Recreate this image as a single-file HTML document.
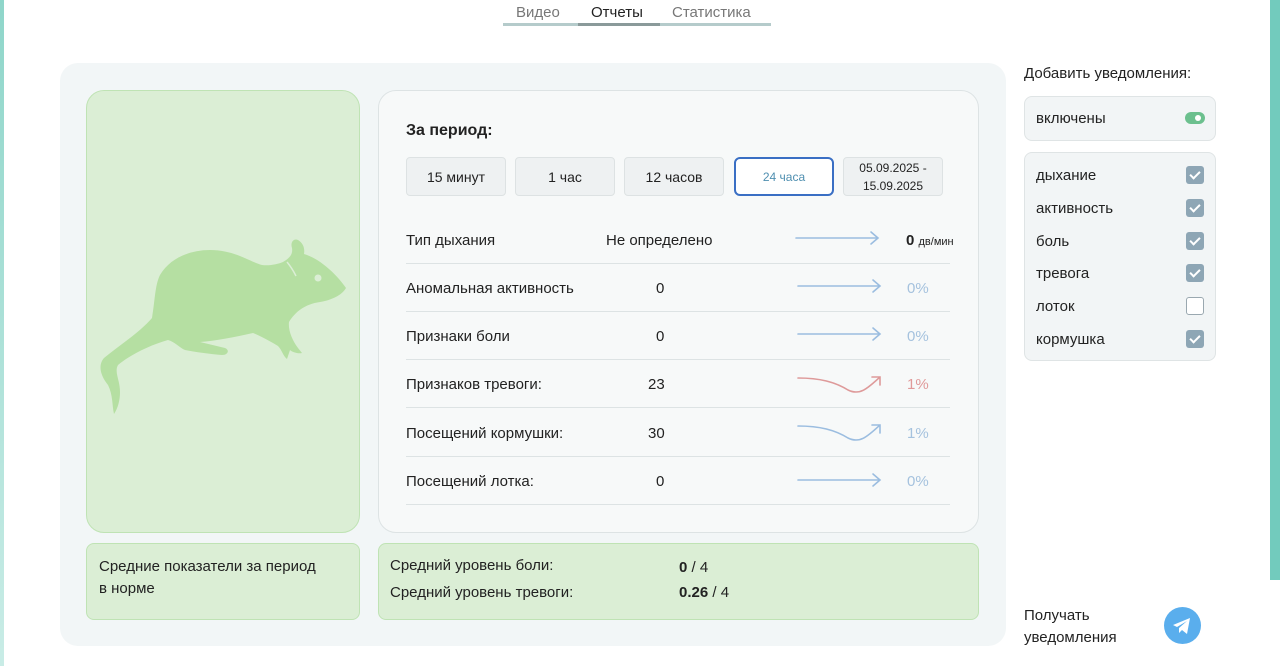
<!DOCTYPE html>
<html><head><meta charset="utf-8"><style>
*{box-sizing:border-box;margin:0;padding:0}
body{width:1280px;height:666px;overflow:hidden;background:#fff;font-family:"Liberation Sans",sans-serif;color:#222;position:relative}
.abs{position:absolute}
.edgeR{right:0;top:0;width:10px;height:580px;background:#72cbbd}
.edgeL{left:0;top:0;width:4px;height:666px;background:linear-gradient(#8fd6ca,#c9ece6)}
.nav{top:4px;font-size:15px;color:#777}
.panel{left:60px;top:63px;width:946px;height:583px;background:#f2f6f7;border-radius:18px}
.green{background:#dbeed5;border:1px solid #bfe3b4;border-radius:18px}
.card{left:378px;top:90px;width:601px;height:443px;background:#f7f9f9;border:1px solid #dde3e4;border-radius:18px}
.btn{top:157px;height:39px;background:#eef1f2;border:1px solid #dde2e3;border-radius:4px;font-size:14px;display:flex;align-items:center;justify-content:center;text-align:center;line-height:18px}
.row{left:406px;width:544px;height:48px;border-bottom:1px solid #dde3e4;font-size:15px}
.row span{position:absolute;top:16px;white-space:nowrap}
.chk{left:1024px;width:192px;background:#f2f5f6;border:1px solid #dfe4e5;border-radius:8px}
.cb{position:absolute;left:161px;width:18px;height:18px;border-radius:3px;background:#8ea6b5}
.cb:after{content:"";position:absolute;left:6px;top:3px;width:4px;height:8px;border:solid #fff;border-width:0 2px 2px 0;transform:rotate(45deg)}
</style></head><body>
<div class="abs edgeR"></div><div class="abs edgeL"></div>
<div class="abs nav" style="left:516px">Видео</div>
<div class="abs nav" style="left:591px;color:#222">Отчеты</div>
<div class="abs nav" style="left:672px">Статистика</div>
<div class="abs" style="left:503px;top:23px;width:268px;height:3px;background:#b5cbcb"></div>
<div class="abs" style="left:578px;top:23px;width:82px;height:3px;background:#8a9a9a"></div>

<div class="abs panel"></div>
<div class="abs green" style="left:86px;top:90px;width:274px;height:443px"></div>
<svg class="abs" style="left:86px;top:90px" width="274" height="443" viewBox="86 90 274 443">
<path fill="#b5dfa2" d="M283,262 C290,258 293,254 292,248 C290,242 294,238 298,240 C303,243 305,248 304,254 C318,258 335,272 346,288 C342,295 332,300 320,302 C305,304 295,312 289,322 C288,330 292,340 298,348 L302,353 C298,354 292,352 290,350 L287,359 C283,356 282,350 278,346 C268,340 260,336 253,333 C235,337 215,341 200,342 L225,348 C230,350 228,355 222,355 C210,354 195,352 185,350 C180,348 175,342 168,340 C150,345 130,355 118,365 C114,372 120,380 120,392 C120,400 118,408 114,414 C112,405 113,395 108,385 C100,375 98,365 104,358 C120,345 140,332 152,318 C155,300 155,285 160,275 C170,258 190,250 210,250 C235,250 250,262 262,265 C270,266 278,264 283,262 Z"/>
<path d="M287,262 C292,268 294,272 296,276" stroke="#dbeed5" stroke-width="1.5" fill="none"/>
<circle cx="318" cy="278" r="3.5" fill="#dbeed5"/>
</svg>

<div class="abs card"></div>
<div class="abs" style="left:406px;top:122px;font-size:16px;font-weight:bold">За период:</div>
<div class="abs btn" style="left:406px;width:100px">15 минут</div>
<div class="abs btn" style="left:515px;width:100px">1 час</div>
<div class="abs btn" style="left:624px;width:100px">12 часов</div>
<div class="abs btn" style="left:734px;width:100px;background:#fff;border:2px solid #3a6fc4;border-radius:6px;color:#4f8fb0;font-size:12px">24 часа</div>
<div class="abs btn" style="left:843px;width:100px;font-size:12px">05.09.2025 -<br>15.09.2025</div>

<div class="abs row" style="top:216px"><span style="left:0">Тип дыхания</span><span style="left:200px">Не определено</span><span style="left:500px;font-weight:bold">0 <small style="font-size:11px;font-weight:normal">дв/мин</small></span></div>
<div class="abs row" style="top:264px"><span style="left:0">Аномальная активность</span><span style="left:250px">0</span><span style="left:501px;color:#a5c2de">0%</span></div>
<div class="abs row" style="top:312px"><span style="left:0">Признаки боли</span><span style="left:250px">0</span><span style="left:501px;color:#a5c2de">0%</span></div>
<div class="abs row" style="top:360px"><span style="left:0">Признаков тревоги:</span><span style="left:242px">23</span><span style="left:501px;color:#e09a9a">1%</span></div>
<div class="abs row" style="top:409px"><span style="left:0">Посещений кормушки:</span><span style="left:242px">30</span><span style="left:501px;color:#a5c2de">1%</span></div>
<div class="abs row" style="top:457px"><span style="left:0">Посещений лотка:</span><span style="left:250px">0</span><span style="left:501px;color:#a5c2de">0%</span></div>
<svg class="abs" style="left:780px;top:220px" width="120" height="280" fill="none" stroke-width="1.6" stroke-linecap="round">
<g stroke="#9bbde0"><path d="M16 18H98M91 12l7 6-7 6"/><path d="M18 66H100M93 60l7 6-7 6"/><path d="M18 114H100M93 108l7 6-7 6"/></g>
<path stroke="#de9a9a" d="M18 158C40 158 55 162 68 170 80 176 88 168 100 157M92 157h8v8"/>
<path stroke="#9bbde0" d="M18 206C40 206 55 210 68 218 80 224 88 216 100 205M92 205h8v8"/>
<path stroke="#9bbde0" d="M18 260H100M93 254l7 6-7 6"/>
</svg>

<div class="abs green" style="left:86px;top:543px;width:274px;height:77px;border-radius:8px;padding:12px;font-size:15px;line-height:22px">Средние показатели за период<br>в норме</div>
<div class="abs green" style="left:378px;top:543px;width:601px;height:77px;border-radius:8px;font-size:15px">
<div class="abs" style="left:11px;top:13px">Средний уровень боли:</div>
<div class="abs" style="left:300px;top:15px"><b>0</b> / 4</div>
<div class="abs" style="left:11px;top:40px">Средний уровень тревоги:</div>
<div class="abs" style="left:300px;top:40px"><b>0.26</b> / 4</div>
</div>

<div class="abs" style="left:1024px;top:65px;font-size:15px">Добавить уведомления:</div>
<div class="abs chk" style="top:96px;height:45px"><span class="abs" style="left:11px;top:13px;font-size:15px">включены</span>
<div class="abs" style="left:160px;top:15px;width:20px;height:12px;border-radius:6px;background:#6cc08e"><div class="abs" style="left:10px;top:3px;width:6px;height:6px;border-radius:3px;background:#fff"></div></div></div>
<div class="abs chk" style="top:152px;height:209px;font-size:15px">
<span class="abs" style="left:11px;top:14px">дыхание</span><div class="cb" style="top:13px"></div>
<span class="abs" style="left:11px;top:47px">активность</span><div class="cb" style="top:46px"></div>
<span class="abs" style="left:11px;top:80px">боль</span><div class="cb" style="top:79px"></div>
<span class="abs" style="left:11px;top:112px">тревога</span><div class="cb" style="top:111px"></div>
<span class="abs" style="left:11px;top:145px">лоток</span><div class="cb" style="top:144px;background:#fff;border:1px solid #9aa8b0"></div>
<span class="abs" style="left:11px;top:178px">кормушка</span><div class="cb" style="top:177px"></div>
</div>
<div class="abs" style="left:1024px;top:605px;font-size:15px;line-height:22px">Получать<br>уведомления</div>
<svg class="abs" style="left:1164px;top:607px" width="37" height="37" viewBox="0 0 37 37"><circle cx="18.5" cy="18.5" r="18.5" fill="#5aaeed"/><path d="M9 18l17-7-3 16-5-4-3 3v-5l8-7-10 6z" fill="#fff"/></svg>
</body></html>
